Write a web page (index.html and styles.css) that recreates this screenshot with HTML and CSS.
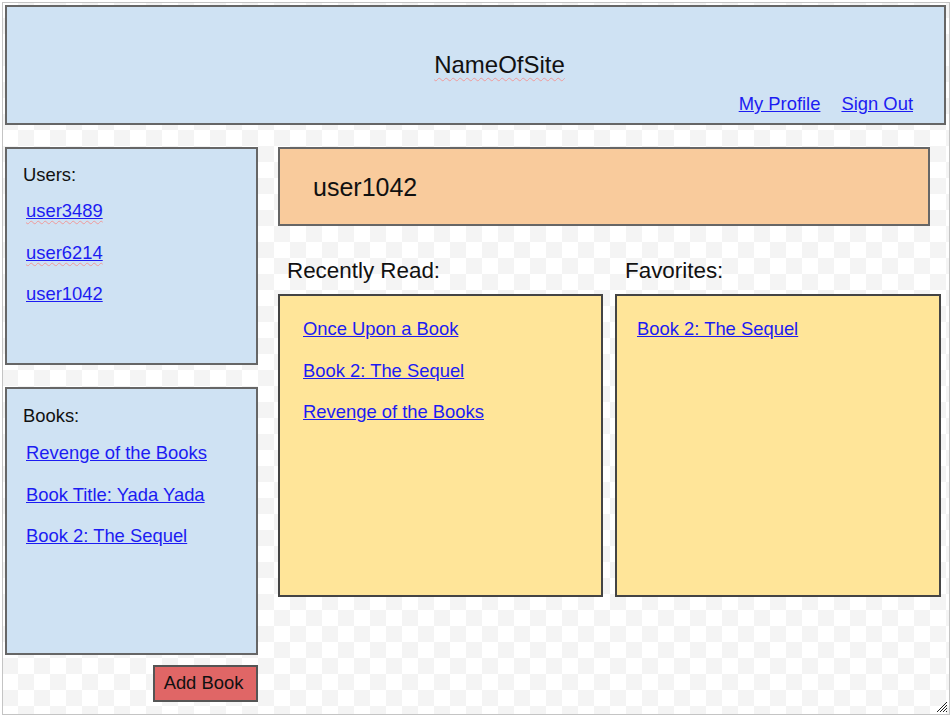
FILE: index.html
```html
<!DOCTYPE html>
<html lang="en">
<head>
<meta charset="utf-8">
<title>NameOfSite</title>
<link rel="stylesheet" href="styles.css">
</head>
<body>
<div class="frame">
  <header class="site-header">
    <div class="site-title"><span class="spell">NameOfSite</span></div>
    <nav class="top-nav">
      <a href="#">My Profile</a>
      <a href="#">Sign Out</a>
    </nav>
  </header>
  <div class="main">
    <aside class="sidebar">
      <section class="panel panel-users">
        <div class="panel-label">Users:</div>
        <div class="panel-links">
          <a href="#"><span class="spell">user3489</span></a>
          <a href="#"><span class="spell">user6214</span></a>
          <a href="#">user1042</a>
        </div>
      </section>
      <section class="panel panel-books">
        <div class="panel-label">Books:</div>
        <div class="panel-links">
          <a href="#">Revenge of the Books</a>
          <a href="#">Book Title: Yada Yada</a>
          <a href="#">Book 2: The Sequel</a>
        </div>
      </section>
      <div class="actions">
        <button class="add-btn" type="button">Add Book</button>
      </div>
    </aside>
    <div class="content">
      <div class="profile-bar">user1042</div>
      <div class="lists">
        <div class="list-col list-col-recent">
          <div class="list-heading">Recently Read:</div>
          <div class="list-box">
            <a href="#">Once Upon a Book</a>
            <a href="#">Book 2: The Sequel</a>
            <a href="#">Revenge of the Books</a>
          </div>
        </div>
        <div class="list-col list-col-fav">
          <div class="list-heading">Favorites:</div>
          <div class="list-box">
            <a href="#">Book 2: The Sequel</a>
          </div>
        </div>
      </div>
    </div>
  </div>
  <svg class="grip" width="12" height="12" viewBox="0 0 12 12">
    <path d="M11 1 L1 11 M11 4 L4 11 M11 7 L7 11 M11 10 L10 11" stroke="#222" stroke-width="1" fill="none"/>
  </svg>
</div>
</body>
</html>
```
FILE: styles.css
```css
* {
  box-sizing: border-box;
}

body {
  margin: 0;
  padding: 2px 0 0 2px;
  background: #fff;
  font-family: "Liberation Sans", Arial, sans-serif;
  color: #111;
}

a {
  color: #1c1cf2;
  text-decoration: underline;
}

.spell {
  text-decoration: underline wavy #f09a9a;
  text-decoration-thickness: 1px;
  text-underline-offset: 3px;
}

.frame {
  position: relative;
  width: 948px;
  height: 713px;
  border: 1px solid #c4c4c4;
  padding: 2px 0 0 2px;
  background-color: #fff;
  background-image: repeating-conic-gradient(#f4f4f4 0 25%, #fff 0 50%);
  background-size: 32px 32px;
  background-position: -1px -1px;
}

.site-header {
  width: 941px;
  height: 120px;
  background: #cfe2f3;
  border: 2px solid #666;
  display: flex;
  flex-direction: column;
}

.site-title {
  font-size: 24px;
  line-height: 28px;
  text-align: center;
  padding: 44px 0 0 48px;
}

.site-title .spell {
  text-underline-offset: 4px;
}

.top-nav {
  display: flex;
  justify-content: flex-end;
  gap: 21px;
  padding-right: 31px;
  margin-top: 14px;
  font-size: 18.4px;
  line-height: 21px;
}

.main {
  display: flex;
  gap: 20px;
  margin-top: 22px;
}

.sidebar {
  width: 253px;
  display: flex;
  flex-direction: column;
}

.panel {
  background: #cfe2f3;
  border: 2px solid #666;
  padding: 15px 0 0 16px;
}

.panel-users {
  height: 218px;
}

.panel-books {
  height: 268px;
  margin-top: 22px;
  padding-top: 16px;
}

.panel-label {
  font-size: 18.4px;
  line-height: 21px;
}

.panel-links {
  display: flex;
  flex-direction: column;
  align-items: flex-start;
  gap: 20.5px;
  margin-top: 15px;
  padding-left: 3px;
  font-size: 18.4px;
  line-height: 21px;
}

.panel-books .panel-links {
  margin-top: 16px;
}

.actions {
  display: flex;
  justify-content: flex-end;
  margin-top: 10px;
}

.add-btn {
  width: 105px;
  height: 37px;
  padding: 0 4px 2px 0;
  background: #e06666;
  border: 2px solid #555;
  font-family: "Liberation Sans", Arial, sans-serif;
  font-size: 18.4px;
  line-height: 21px;
  color: #111;
}

.content {
  width: 663px;
}

.profile-bar {
  width: 652px;
  height: 79px;
  background: #f9cb9c;
  border: 2px solid #666;
  display: flex;
  align-items: center;
  padding-left: 33px;
  font-size: 25px;
  line-height: 30px;
}

.lists {
  display: flex;
  gap: 12px;
  margin-top: 32px;
}

.list-col {
  width: 325px;
}

.list-col-fav {
  width: 326px;
}

.list-heading {
  font-size: 22.4px;
  line-height: 26px;
  padding-left: 9px;
  margin-bottom: 10px;
}

.list-col-fav .list-heading {
  padding-left: 10px;
}

.list-box {
  height: 303px;
  background: #ffe599;
  border: 2px solid #444;
  padding: 22px 0 0 23px;
  display: flex;
  flex-direction: column;
  align-items: flex-start;
  gap: 20.5px;
  font-size: 18.4px;
  line-height: 21px;
}

.list-col-fav .list-box {
  padding-left: 20px;
}

.grip {
  position: absolute;
  right: 1px;
  bottom: 1px;
}
```
